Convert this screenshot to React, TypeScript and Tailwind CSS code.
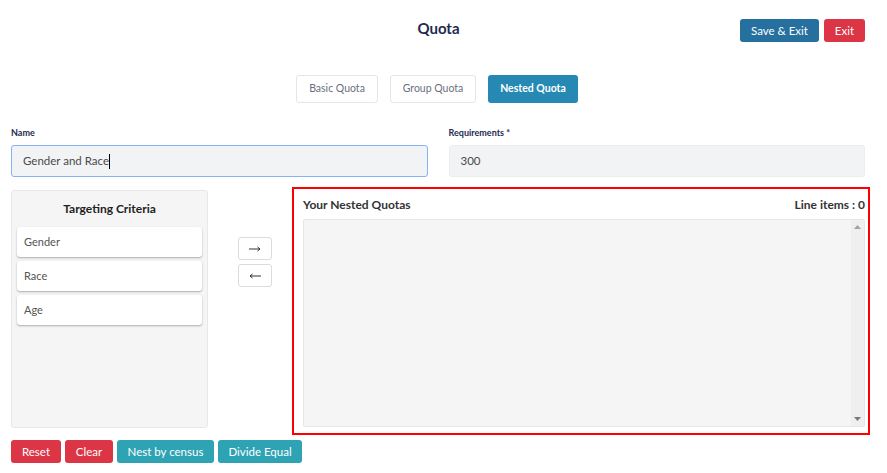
import React from "react";

export default function App() {
  const font = { fontFamily: "Lato, 'Open Sans', sans-serif" };
  return (
    <div className="w-[887px] h-[473px] bg-white relative overflow-hidden text-[#333]" style={font}>
      {/* header */}
      <div className="relative h-[60px]">
        <div className="absolute left-0 right-[10px] top-[17px] text-center text-[15px] font-bold text-[#1d2b4f]">Quota</div>
        <div className="absolute right-[22px] top-[19px] flex gap-[5px]">
          <button className="h-[23px] w-[79px] rounded-[3px] bg-[#25709e] text-white text-[11.5px] leading-none">Save &amp; Exit</button>
          <button className="h-[23px] w-[41px] rounded-[3px] bg-[#dc3545] text-white text-[11.5px] leading-none">Exit</button>
        </div>
      </div>
      {/* tabs */}
      <div className="flex justify-center gap-[12px] mt-[15px] pr-[13px]">
        <button className="h-[28px] w-[82px] rounded-[3px] border border-[#e3e6ea] bg-white text-[10.5px] text-[#6b7080]">Basic Quota</button>
        <button className="h-[28px] w-[86px] rounded-[3px] border border-[#e3e6ea] bg-white text-[10.5px] text-[#6b7080]">Group Quota</button>
        <button className="h-[28px] w-[90px] rounded-[3px] bg-[#2589b3] text-white text-[10.5px] font-bold">Nested Quota</button>
      </div>
      {/* fields */}
      <div className="grid grid-cols-2 gap-[21px] pl-[11px] pr-[22px] mt-[23px]">
        <div>
          <div className="text-[9px] font-bold text-[#1d2b4f] h-[13px] leading-[13px]">Name</div>
          <div className="mt-[6px] h-[32px] rounded-[3px] border border-[#86b2f5] bg-[#f2f3f5] flex items-center pl-[11px] text-[11.5px] text-[#4a4a4a]">
            Gender and Race<span className="inline-block w-[1px] h-[15px] bg-black" />
          </div>
        </div>
        <div>
          <div className="text-[9px] font-bold text-[#1d2b4f] h-[13px] leading-[13px]">Requirements *</div>
          <div className="mt-[6px] h-[32px] rounded-[3px] border border-[#ebedf0] bg-[#f2f3f5] flex items-center pl-[11px] text-[11.5px] text-[#4a4a4a]">300</div>
        </div>
      </div>
      {/* main row */}
      <div className="flex pl-[11px] mt-[10px] h-[248px]">
        <div className="w-[197px] mt-[3px] h-[238px] bg-[#f5f5f5] border border-[#e8e8e8] rounded-[3px] px-[5px]">
          <div className="text-center text-[12px] font-bold text-[#222] mt-[10px] h-[16px] leading-[16px]">Targeting Criteria</div>
          <div className="mt-[10px] flex flex-col gap-[4px]">
            {["Gender", "Race", "Age"].map((t) => (
              <div key={t} className="h-[30px] bg-white rounded-[3px] shadow-[0_1px_2px_rgba(0,0,0,0.3)] flex items-center pl-[7px] text-[11px] text-[#555]">{t}</div>
            ))}
          </div>
        </div>
        <div className="w-[84px] flex flex-col items-center pt-[50px] gap-[4px] pl-[10px]">
          <button className="w-[34px] h-[23px] bg-white border border-[#dcdcdc] rounded-[3px] flex items-center justify-center">
            <svg width="12" height="6" viewBox="0 0 12 6"><path d="M0 3 H11 M8.5 1 L11 3 L8.5 5" stroke="#333" strokeWidth="1" fill="none" /></svg>
          </button>
          <button className="w-[34px] h-[23px] bg-white border border-[#dcdcdc] rounded-[3px] flex items-center justify-center">
            <svg width="12" height="6" viewBox="0 0 12 6"><path d="M12 3 H1 M3.5 1 L1 3 L3.5 5" stroke="#333" strokeWidth="1" fill="none" /></svg>
          </button>
        </div>
        <div className="w-[578px] h-[248px] border-2 border-[#ff0000] pl-[9px] pr-[3px] flex flex-col">
          <div className="flex justify-between items-center h-[30px] pt-[1px] text-[12px] font-bold text-[#333]">
            <span>Your Nested Quotas</span>
            <span>Line items : 0</span>
          </div>
          <div className="h-[208px] bg-[#f5f5f5] border border-[#e6e6e6] rounded-[2px] flex justify-end">
            <div className="w-[13px] h-full bg-[#efefef] flex flex-col justify-between items-center py-[5px]">
              <svg width="7" height="4" viewBox="0 0 7 4"><path d="M0 4 L3.5 0 L7 4Z" fill="#a3a3a3" /></svg>
              <svg width="7" height="4" viewBox="0 0 7 4"><path d="M0 0 L3.5 4 L7 0Z" fill="#7a7a7a" /></svg>
            </div>
          </div>
        </div>
      </div>
      {/* bottom buttons */}
      <div className="flex gap-[4px] pl-[11px] mt-[5px]">
        <button className="h-[23px] w-[50px] rounded-[3px] bg-[#dc3545] text-white text-[11.5px]">Reset</button>
        <button className="h-[23px] w-[48px] rounded-[3px] bg-[#dc3545] text-white text-[11.5px]">Clear</button>
        <button className="h-[23px] w-[97px] rounded-[3px] bg-[#2ea3b4] text-white text-[11.5px]">Nest by census</button>
        <button className="h-[23px] w-[84px] rounded-[3px] bg-[#2ea3b4] text-white text-[11.5px]">Divide Equal</button>
      </div>
    </div>
  );
}
